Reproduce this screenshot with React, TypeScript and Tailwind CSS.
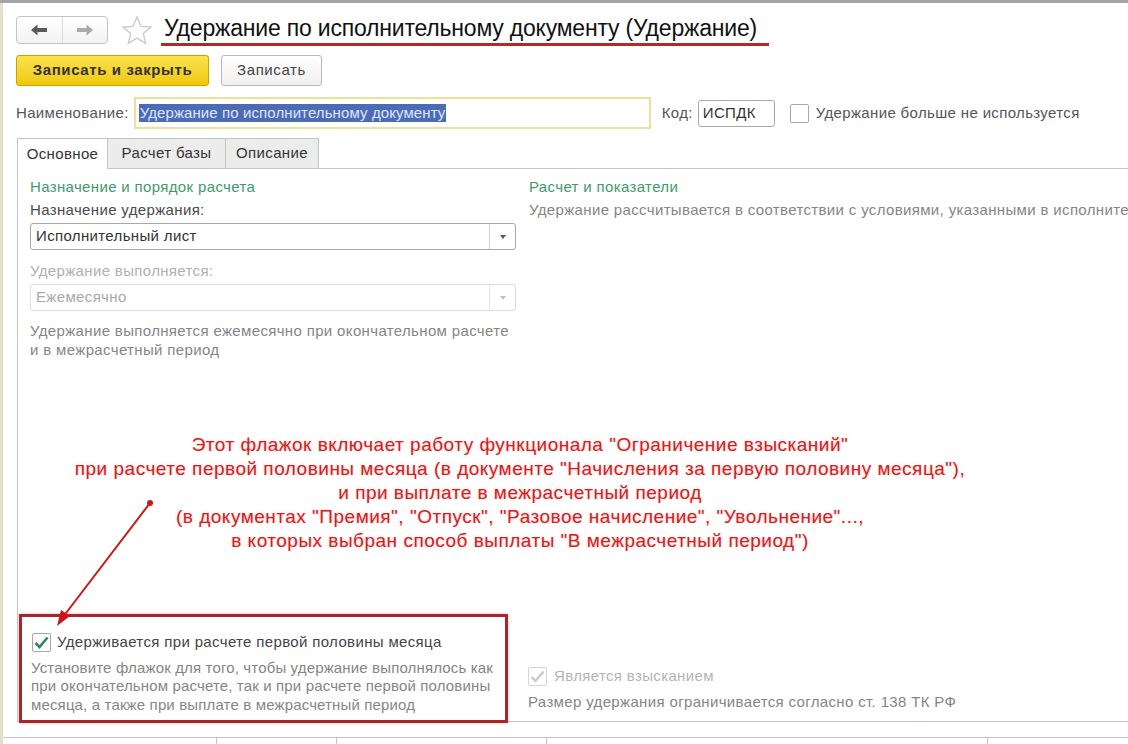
const font = { fontFamily: '"Liberation Sans", Arial, sans-serif' };

function Check({ disabled }: { disabled?: boolean }) {
  return (
    <div
      className={`flex h-[19px] w-[19px] shrink-0 items-center justify-center rounded-[2px] border bg-white ${
        disabled ? "border-[#d4d4d4]" : "border-[#a8a8a8]"
      }`}
    >
      <svg width="15" height="13" viewBox="0 0 15 13">
        <path
          d="M1.5 7 L5.5 11 L13.5 1.5"
          fill="none"
          stroke={disabled ? "#c4c4c4" : "#2f8a55"}
          strokeWidth={disabled ? 2 : 2.6}
        />
      </svg>
    </div>
  );
}

function Select({ value, disabled }: { value: string; disabled?: boolean }) {
  return (
    <div
      className={`flex h-[27px] w-[486px] items-center rounded-[3px] border bg-white ${
        disabled ? "border-[#dcdcdc] text-[#a8a8a8]" : "border-[#a8a8a8] text-[#333]"
      }`}
    >
      <span className="flex-1 pl-[5px]">{value}</span>
      <div
        className={`flex h-full w-[26px] items-center justify-center border-l ${
          disabled ? "border-[#e4e4e4]" : "border-[#d0d0d0]"
        }`}
      >
        <div
          className={`h-0 w-0 border-x-[3px] border-t-[4px] border-x-transparent ${
            disabled ? "border-t-[#c0c0c0]" : "border-t-[#555]"
          }`}
        />
      </div>
    </div>
  );
}

function NavArrow({ dir, color }: { dir: "left" | "right"; color: string }) {
  return (
    <svg width="18" height="12" viewBox="0 0 18 12" className={dir === "right" ? "-scale-x-100" : ""}>
      <path d="M1 6 L7.5 0.5 L7.5 4 L17 4 L17 8 L7.5 8 L7.5 11.5 Z" fill={color} />
    </svg>
  );
}

export default function App() {
  const note = [
    'Этот флажок включает работу функционала "Ограничение взысканий"',
    'при расчете первой половины месяца (в документе "Начисления за первую половину месяца"),',
    "и при выплате в межрасчетный период",
    '(в документах "Премия", "Отпуск", "Разовое начисление", "Увольнение"...,',
    'в которых выбран способ выплаты "В межрасчетный период")',
  ];

  return (
    <div
      className="relative h-[744px] w-[1128px] overflow-hidden border-t-[3px] border-[#a4a4a4] bg-white"
      style={font}
    >
      <div className="flex h-full border-l-[3px] border-[#e4e0cc]">
        <div className="flex min-w-0 flex-1 flex-col tracking-[0.35px]">
          {/* header */}
          <div className="flex shrink-0 items-center pl-[13px] pt-[11px]">
            <div className="flex h-[28px] w-[92px] rounded-[4px] border border-[#c4c4c4] bg-gradient-to-b from-white to-[#f2f2f2]">
              <div className="flex flex-1 items-center justify-center border-r border-[#dadada]">
                <NavArrow dir="left" color="#5a5a5a" />
              </div>
              <div className="flex flex-1 items-center justify-center">
                <NavArrow dir="right" color="#aaaaaa" />
              </div>
            </div>
            <svg className="ml-[13px]" width="32" height="30" viewBox="0 0 32 30">
              <path
                d="M16 2 L19.9 11.3 L30 12 L22.3 18.5 L24.7 28.4 L16 23.1 L7.3 28.4 L9.7 18.5 L2 12 L12.1 11.3 Z"
                fill="none"
                stroke="#c8c8c8"
                strokeWidth="1.3"
              />
            </svg>
            <div className="ml-[11px] flex flex-col">
              <span className="text-[23px] leading-[28px] tracking-[-0.2px] text-[#111]">
                Удержание по исполнительному документу (Удержание)
              </span>
              <div className="-ml-[3px] mt-[1px] h-[3px] w-[608px] bg-[#b3282a]" />
            </div>
          </div>

          {/* buttons */}
          <div className="mt-[9px] flex shrink-0 gap-[12px] pl-[13px] text-[15px]">
            <div className="flex h-[31px] w-[193px] items-center justify-center rounded-[3px] border border-[#c9a400] bg-gradient-to-b from-[#fbe24a] to-[#f0c800] font-bold tracking-[0.6px] text-[#333]">
              Записать и закрыть
            </div>
            <div className="flex h-[31px] w-[101px] items-center justify-center rounded-[3px] border border-[#b8b8b8] bg-gradient-to-b from-white to-[#f0f0f0] tracking-[0.6px] text-[#444]">
              Записать
            </div>
          </div>

          {/* name row */}
          <div className="mt-[11px] flex shrink-0 items-center whitespace-nowrap pl-[13px] text-[15px]">
            <span className="text-[#555]">Наименование:</span>
            <div className="ml-[5px] flex h-[32px] w-[517px] items-center border-2 border-[#eee09a] bg-white px-[3px]">
              <span className="bg-[#4d6bb5] px-[1px] leading-[18px] tracking-[0.1px] text-[#dce6ff]">
                Удержание по исполнительному документу
              </span>
            </div>
            <span className="ml-[11px] text-[#555]">Код:</span>
            <div className="ml-[5px] flex h-[27px] w-[77px] items-center rounded-[3px] border border-[#a8a8a8] px-[4px] text-[#333]">
              ИСПДК
            </div>
            <div className="ml-[15px] h-[19px] w-[19px] rounded-[2px] border border-[#a8a8a8]" />
            <span className="ml-[7px] text-[#555]">Удержание больше не используется</span>
          </div>

          {/* tabs */}
          <div className="mt-[9px] flex shrink-0 pl-[14px] text-[15px]">
            <div className="flex h-[31px] w-[91px] items-center justify-center border border-b-0 border-[#c4c4c4] bg-white text-[#333]">
              Основное
            </div>
            <div className="flex h-[31px] w-[118px] items-center justify-center border-b border-r border-t border-[#c4c4c4] bg-[#ececec] text-[#333]">
              Расчет базы
            </div>
            <div className="flex h-[31px] w-[93px] items-center justify-center border-b border-r border-t border-[#c4c4c4] bg-[#ececec] text-[#333]">
              Описание
            </div>
            <div className="flex-1 border-b border-[#c4c4c4]" />
          </div>

          {/* panel */}
          <div className="relative ml-[14px] flex h-[553px] shrink-0 flex-col border-b border-l border-[#c4c4c4] text-[15px]">
            <div className="flex pt-[8px]">
              <div className="w-[511px] shrink-0 pl-[12px]">
                <div className="leading-[20px] text-[#3f9a6c]">Назначение и порядок расчета</div>
                <div className="mt-[3px] leading-[20px] text-[#4a4a4a]">Назначение удержания:</div>
                <div className="mt-[3px]">
                  <Select value="Исполнительный лист" />
                </div>
                <div className="mt-[11px] leading-[20px] text-[#b0b0b0]">Удержание выполняется:</div>
                <div className="mt-[3px]">
                  <Select value="Ежемесячно" disabled />
                </div>
                <div className="mt-[10px] leading-[19px] text-[#858585]">
                  Удержание выполняется ежемесячно при окончательном расчете
                  <br />и в межрасчетный период
                </div>
              </div>
              <div className="min-w-0 flex-1 overflow-hidden whitespace-nowrap">
                <div className="leading-[20px] text-[#3f9a6c]">Расчет и показатели</div>
                <div className="mt-[3px] leading-[20px] text-[#858585]">
                  Удержание рассчитывается в соответствии с условиями, указанными в исполнительном документе
                </div>
              </div>
            </div>

            {/* annotation */}
            <div className="mt-[74px] flex w-[1004px] flex-col items-center whitespace-nowrap text-[19px] leading-[24px] tracking-[0.5px] text-[#d22020] [text-shadow:0_0_3px_#f5c8c8]">
              {note.map((line) => (
                <div key={line}>{line}</div>
              ))}
            </div>

            {/* bottom */}
            <div className="mt-auto flex items-end">
              <div className="-mb-[2px] ml-[1px] w-[489px] shrink-0 border-[3px] border-[#a8262a] pb-[6px] pl-[10px] pt-[14px] shadow-[0_0_3px_#e8b8b8]">
                <div className="flex items-center gap-[6px]">
                  <Check />
                  <span className="text-[#444]">Удерживается при расчете первой половины месяца</span>
                </div>
                <div className="-ml-[1px] mt-[5px] whitespace-nowrap leading-[18.5px] tracking-[0.15px] text-[#858585]">
                  Установите флажок для того, чтобы удержание выполнялось как
                  <br />
                  при окончательном расчете, так и при расчете первой половины
                  <br />
                  месяца, а также при выплате в межрасчетный период
                </div>
              </div>
              <div className="pb-[8px] pl-[20px]">
                <div className="flex items-center gap-[7px]">
                  <Check disabled />
                  <span className="text-[#b4b4b4]">Является взысканием</span>
                </div>
                <div className="mt-[3px] whitespace-nowrap text-[#858585]">
                  Размер удержания ограничивается согласно ст. 138 ТК РФ
                </div>
              </div>
            </div>

            {/* arrow */}
            <svg className="absolute left-0 top-0" width="200" height="470" viewBox="0 0 200 470">
              <line x1="132" y1="334" x2="45" y2="448" stroke="#c81818" strokeWidth="2" />
              <circle cx="132" cy="334" r="3" fill="#c81818" />
              <path d="M39 457 L43 441 L52 447 Z" fill="#c81818" />
            </svg>
          </div>

          {/* footer grid */}
          <div className="mt-[15px] flex h-[20px] shrink-0 border-t border-[#c4c4c4]">
            <div className="w-[214px] border-r border-[#c4c4c4]" />
            <div className="w-[120px] border-r border-[#c4c4c4]" />
            <div className="w-[210px] border-r border-[#c4c4c4]" />
            <div className="w-[441px] border-r border-[#c4c4c4]" />
          </div>
        </div>
      </div>
    </div>
  );
}
